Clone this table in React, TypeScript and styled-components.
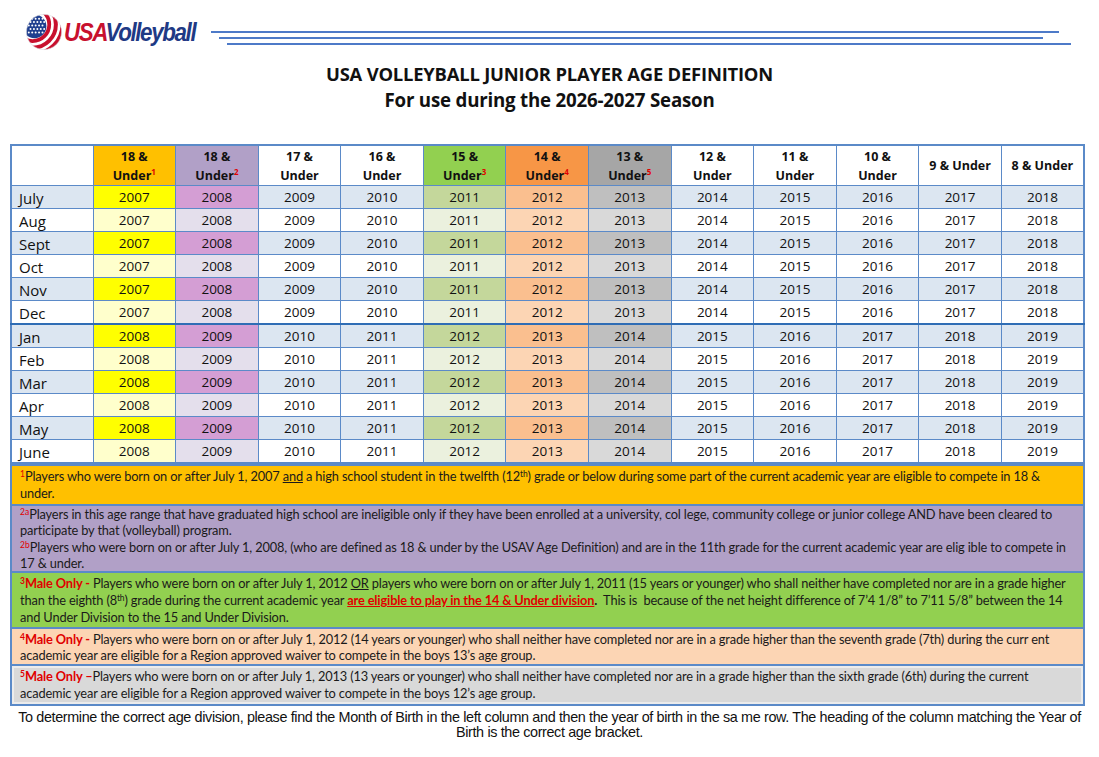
import React from 'react';
import styled, { createGlobalStyle } from 'styled-components';

const GlobalStyle = createGlobalStyle`
  html, body {
    margin: 0;
    padding: 0;
    background: #ffffff;
  }
  body {
    font-family: 'Open Sans', 'Liberation Sans', sans-serif;
    color: #111111;
  }
`;

const BLUE = '#5b8ac8';

interface ColumnDef {
  top: string;
  bottom?: string;
  note?: string;
  head: string;
  odd: string;
  even: string;
}

const columns: ColumnDef[] = [
  { top: '18 &', bottom: 'Under', note: '1', head: '#ffc000', odd: '#ffff00', even: '#ffffcc' },
  { top: '18 &', bottom: 'Under', note: '2', head: '#b1a0c7', odd: '#d49ed4', even: '#e4dfec' },
  { top: '17 &', bottom: 'Under', head: '#ffffff', odd: '#dce6f1', even: '#ffffff' },
  { top: '16 &', bottom: 'Under', head: '#ffffff', odd: '#dce6f1', even: '#ffffff' },
  { top: '15 &', bottom: 'Under', note: '3', head: '#92d050', odd: '#c4d79b', even: '#ebf1de' },
  { top: '14 &', bottom: 'Under', note: '4', head: '#f79646', odd: '#fabf8f', even: '#fcd5b4' },
  { top: '13 &', bottom: 'Under', note: '5', head: '#a6a6a6', odd: '#bfbfbf', even: '#d9d9d9' },
  { top: '12 &', bottom: 'Under', head: '#ffffff', odd: '#dce6f1', even: '#ffffff' },
  { top: '11 &', bottom: 'Under', head: '#ffffff', odd: '#dce6f1', even: '#ffffff' },
  { top: '10 &', bottom: 'Under', head: '#ffffff', odd: '#dce6f1', even: '#ffffff' },
  { top: '9 & Under', head: '#ffffff', odd: '#dce6f1', even: '#ffffff' },
  { top: '8 & Under', head: '#ffffff', odd: '#dce6f1', even: '#ffffff' }
];

const months = [
  { name: 'July', base: 2007 },
  { name: 'Aug', base: 2007 },
  { name: 'Sept', base: 2007 },
  { name: 'Oct', base: 2007 },
  { name: 'Nov', base: 2007 },
  { name: 'Dec', base: 2007 },
  { name: 'Jan', base: 2008 },
  { name: 'Feb', base: 2008 },
  { name: 'Mar', base: 2008 },
  { name: 'Apr', base: 2008 },
  { name: 'May', base: 2008 },
  { name: 'June', base: 2008 }
];

const Page = styled.div`
  width: 1099px;
  height: 757px;
  overflow: hidden;
`;

const Header = styled.header`
  display: flex;
  align-items: flex-start;
  height: 56px;
  box-sizing: border-box;
  padding: 13px 0 0 25px;
`;

const Logo = styled.div`
  display: flex;
  align-items: center;
  gap: 2px;
`;

const Wordmark = styled.div`
  font-family: 'Liberation Sans', Arial, sans-serif;
  font-weight: 700;
  font-style: italic;
  font-size: 26px;
  letter-spacing: -1.6px;
  transform: scaleX(0.86);
  transform-origin: left center;
  margin-left: -1px;
  margin-top: 1px;
  width: 140px;
  white-space: nowrap;
`;

const WordPart = styled.span<{ $color: string }>`
  color: ${p => p.$color};
`;

const Rules = styled.div`
  display: flex;
  flex-direction: column;
  gap: 4px;
  flex: 1;
  margin-top: 18px;
`;

const Rule = styled.div<{ $start: number; $end: number }>`
  height: 2px;
  background: #4d7ac8;
  margin-left: ${p => p.$start}px;
  margin-right: ${p => p.$end}px;
`;

const Titles = styled.div`
  text-align: center;
  font-family: 'Open Sans', sans-serif;
  font-weight: 700;
  color: #111;
  padding-top: 5px;
  height: 88px;
  box-sizing: border-box;
`;

const Title = styled.div<{ $size: number }>`
  font-size: ${p => p.$size}px;
  line-height: 26px;
  letter-spacing: -0.2px;
`;

const Body = styled.div`
  padding-left: 10px;
  width: 1075px;
`;

const Table = styled.table`
  width: 100%;
  border-collapse: collapse;
  table-layout: fixed;
  border: 2px solid ${BLUE};
  font-family: 'Open Sans', sans-serif;
`;

const HeadCell = styled.th<{ $bg: string }>`
  background: ${p => p.$bg};
  border: 1px solid ${BLUE};
  font-size: 12.5px;
  font-weight: 700;
  line-height: 19px;
  height: 39px;
  padding: 0;
  color: #111;
  vertical-align: middle;
`;

const Sup = styled.sup`
  color: #e00000;
  font-size: 8px;
  line-height: 0;
  vertical-align: 5px;
`;

const Row = styled.tr<{ $split?: boolean }>`
  height: 23px;
  ${p => (p.$split ? `border-top: 2.5px solid #2f6db5;` : '')}
`;

const MonthCell = styled.td<{ $bg: string }>`
  background: ${p => p.$bg};
  border: 1px solid ${BLUE};
  font-size: 15px;
  padding: 0 0 0 7px;
  line-height: 20px;
  padding-top: 2px;
`;

const YearCell = styled.td<{ $bg: string }>`
  background: ${p => p.$bg};
  border: 1px solid ${BLUE};
  text-align: center;
  font-size: 13.5px;
  padding: 0;
  line-height: 21px;
`;

const Notes = styled.div`
  border: 2px solid ${BLUE};
  border-top: none;
  font-family: 'Lato', sans-serif;
  font-size: 12.8px;
  letter-spacing: -0.15px;
  color: #1a1a1a;
`;

const Note = styled.div<{ $bg: string; $pad: string; $lh: number }>`
  background: ${p => p.$bg};
  padding: ${p => p.$pad};
  border-top: 2px solid ${BLUE};
  line-height: ${p => p.$lh}px;
  white-space: nowrap;
`;

const InsetNote = styled(Note)`
  box-shadow: inset 0 0 0 2px #ececec;
`;

const Line = styled.div<{ $gap?: number }>`
  margin-top: ${p => p.$gap || 0}px;
`;

const Mark = styled.sup`
  color: #e00000;
  font-size: 8.5px;
  line-height: 0;
  vertical-align: 4px;
  letter-spacing: 0;
`;

const Small = styled.sup`
  font-size: 8.5px;
  line-height: 0;
  vertical-align: 4px;
`;

const Alert = styled.span`
  color: #e00000;
  font-weight: 700;
`;

const Under = styled.span`
  text-decoration: underline;
`;

const RedLink = styled.span`
  color: #e00000;
  font-weight: 700;
  text-decoration: underline;
`;

const Strong = styled.span`
  font-weight: 700;
`;

const Footer = styled.p`
  margin: 4px 0 0;
  text-align: center;
  font-family: 'Liberation Sans', Arial, sans-serif;
  font-size: 14.4px;
  letter-spacing: -0.37px;
  line-height: 15px;
  color: #111;
`;

function Ball() {
  const dots: React.ReactNode[] = [];
  for (let r = 0; r < 5; r++) {
    for (let c = 0; c < 5; c++) {
      const x = 4 + c * 3.6 + (r % 2) * 1.8;
      const y = 6 + r * 3.6;
      dots.push(<circle key={`${r}-${c}`} cx={x} cy={y} r={1.05} fill="#ffffff" />);
    }
  }
  return (
    <svg width="38" height="38" viewBox="0 0 40 40">
      <defs>
        <clipPath id="ballClip">
          <circle cx="20" cy="20" r="18.5" />
        </clipPath>
      </defs>
      <g clipPath="url(#ballClip)">
        <rect width="40" height="40" fill="#ffffff" />
        <circle cx="10" cy="14" r="12.5" fill="#1f3f8f" />
        {dots}
        <circle cx="8" cy="12" r="17.5" fill="none" stroke="#c8102e" strokeWidth="4" />
        <circle cx="8" cy="12" r="24.5" fill="none" stroke="#c8102e" strokeWidth="4.2" />
        <circle cx="8" cy="12" r="31.5" fill="none" stroke="#c8102e" strokeWidth="4.4" />
      </g>
      <circle cx="20" cy="20" r="18.5" fill="none" stroke="#d7d7de" strokeWidth="0.6" />
    </svg>
  );
}

export default function App() {
  return (
    <Page>
      <GlobalStyle />
      <Header>
        <Logo>
          <Ball />
          <Wordmark>
            <WordPart $color="#c8102e">USA</WordPart>
            <WordPart $color="#1f3a85">Volleyball</WordPart>
          </Wordmark>
        </Logo>
        <Rules>
          <Rule $start={7} $end={40} />
          <Rule $start={15} $end={56} />
          <Rule $start={23} $end={28} />
        </Rules>
      </Header>

      <Titles>
        <Title $size={18.4}>USA VOLLEYBALL JUNIOR PLAYER AGE DEFINITION</Title>
        <Title $size={18.7}>For use during the 2026-2027 Season</Title>
      </Titles>

      <Body>
        <Table>
          <colgroup>
            <col style={{ width: '82px' }} />
          </colgroup>
          <thead>
            <tr>
              <HeadCell $bg="#ffffff" />
              {columns.map((col, i) => (
                <HeadCell key={i} $bg={col.head}>
                  {col.top}
                  {col.bottom && (
                    <>
                      <br />
                      {col.bottom}
                      {col.note && <Sup>{col.note}</Sup>}
                    </>
                  )}
                </HeadCell>
              ))}
            </tr>
          </thead>
          <tbody>
            {months.map((m, r) => {
              const odd = r % 2 === 0;
              return (
                <Row key={m.name} $split={m.name === 'Jan'}>
                  <MonthCell $bg={odd ? '#dce6f1' : '#ffffff'}>{m.name}</MonthCell>
                  {columns.map((col, i) => (
                    <YearCell key={i} $bg={odd ? col.odd : col.even}>
                      {m.base + i}
                    </YearCell>
                  ))}
                </Row>
              );
            })}
          </tbody>
        </Table>

        <Notes>
          <Note $bg="#ffc000" $pad="2px 8px 2px 8px" $lh={17}>
            <Line>
              <Mark>1</Mark>Players who were born on or after July 1, 2007 <Under>and</Under> a high school student in the
              twelfth (12<Small>th</Small>) grade or below during some part of the current academic year are eligible to compete in 18 &amp;
            </Line>
            <Line>under.</Line>
          </Note>
          <Note $bg="#b1a0c7" $pad="1px 8px 0 8px" $lh={15.5}>
            <Line>
              <Mark>2a</Mark>Players in this age range that have graduated high school are ineligible only if they have been
              enrolled at a university, col lege, community college or junior college AND have been cleared to
            </Line>
            <Line>participate by that (volleyball) program.</Line>
            <Line $gap={2}>
              <Mark>2b</Mark>Players who were born on or after July 1, 2008, (who are defined as 18 &amp; under by the USAV Age
              Definition) and are in the 11th grade for the current academic year are elig ible to compete in
            </Line>
            <Line>17 &amp; under.</Line>
          </Note>
          <Note $bg="#92d050" $pad="2px 8px 1px 8px" $lh={17}>
            <Line>
              <Alert>
                <Mark>3</Mark>Male Only -
              </Alert>{' '}
              Players who were born on or after July 1, 2012 <Under>OR</Under> players who were born on or after July 1,
              2011 (15 years or younger) who shall neither have completed nor are in a grade higher
            </Line>
            <Line>
              than the eighth (8<Small>th</Small>) grade during the current academic year{' '}
              <RedLink>are eligible to play in the 14 &amp; Under division</RedLink>
              <Strong>.</Strong>&nbsp; This is&nbsp; because of the net height difference of 7’4 1/8” to 7’11 5/8” between
              the 14
            </Line>
            <Line>and Under Division to the 15 and Under Division.</Line>
          </Note>
          <Note $bg="#fcd5b4" $pad="2px 8px 1px 8px" $lh={16}>
            <Line>
              <Alert>
                <Mark>4</Mark>Male Only -
              </Alert>{' '}
              Players who were born on or after July 1, 2012 (14 years or younger) who shall neither have completed nor are
              in a grade higher than the seventh grade (7th) during the curr ent
            </Line>
            <Line>academic year are eligible for a Region approved waiver to compete in the boys 13’s age group.</Line>
          </Note>
          <InsetNote $bg="#d9d9d9" $pad="2px 8px 2px 8px" $lh={17}>
            <Line>
              <Alert>
                <Mark>5</Mark>Male Only –
              </Alert>
              Players who were born on or after July 1, 2013 (13 years or younger) who shall neither have completed nor are
              in a grade higher than the sixth grade (6th) during the current
            </Line>
            <Line>academic year are eligible for a Region approved waiver to compete in the boys 12’s age group.</Line>
          </InsetNote>
        </Notes>
      </Body>

      <Footer>
        To determine the correct age division, please find the Month of Birth in the left column and then the year of birth in
        the sa me row. The heading of the column matching the Year of
        <br />
        Birth is the correct age bracket.
      </Footer>
    </Page>
  );
}
